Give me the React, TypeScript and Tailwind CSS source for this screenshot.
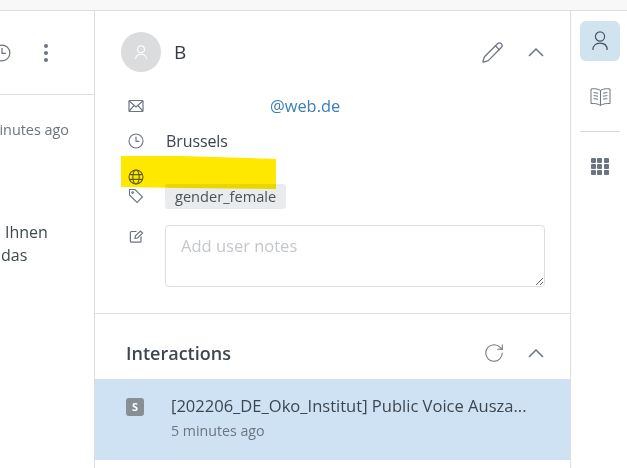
import { Pencil, RotateCw } from 'lucide-react';

function MailIcon() {
  return (
    <svg width="16" height="14" viewBox="0 0 16 14" fill="none" stroke="#6b7480" strokeWidth="1.2">
      <rect x="1" y="1.5" width="14" height="11" rx="0.8" />
      <path d="M1.2 2 L8 8 L14.8 2 M1.2 12 L6 6.6 M14.8 12 L10 6.6" />
    </svg>
  );
}

function ClockIcon({ size = 16 }: { size?: number }) {
  return (
    <svg width={size} height={size} viewBox="0 0 16 16" fill="none" stroke="#6b7480" strokeWidth="1.1">
      <circle cx="8" cy="8" r="7" />
      <path d="M8 3.6 V8.4 H11.4" />
    </svg>
  );
}

function GlobeIcon() {
  return (
    <svg width="16" height="16" viewBox="0 0 16 16" fill="none" stroke="#5f6a72" strokeWidth="1.1">
      <circle cx="8" cy="8" r="7" />
      <ellipse cx="8" cy="8" rx="3.2" ry="7" />
      <path d="M1.4 5.6 H14.6 M1.4 10.4 H14.6" />
    </svg>
  );
}

function TagIcon() {
  return (
    <svg width="16" height="16" viewBox="0 0 16 16" fill="none" stroke="#6b7480" strokeWidth="1.1">
      <path d="M1.5 1.5 H7 L14.5 9 L9 14.5 L1.5 7 Z" />
      <circle cx="4.6" cy="4.6" r="0.8" />
    </svg>
  );
}

function NoteIcon() {
  return (
    <svg width="15" height="15" viewBox="0 0 15 15" fill="none" stroke="#6b7480" strokeWidth="1.2">
      <path d="M7.5 2.5 H2.4 A1 1 0 0 0 1.4 3.5 V12.2 A1 1 0 0 0 2.4 13.2 H11 A1 1 0 0 0 12 12.2 V7.5" />
      <path d="M6 9.4 L6.5 6.9 L11.4 2 L13.5 4.1 L8.6 9 Z" />
    </svg>
  );
}

function BookIcon() {
  return (
    <svg width="21" height="20" viewBox="0 0 21 20" fill="none" stroke="#6b7480" strokeWidth="1">
      <path d="M1 2 C4 1.4 7.5 1.6 10.5 3.4 C13.5 1.6 17 1.4 20 2 V16.6 C17 16.2 13.5 16.6 10.5 18.4 C7.5 16.6 4 16.2 1 16.6 Z" />
      <path d="M10.5 3.4 V18.4 M3.6 5.6 L8 6.2 M3.6 8.6 L8 9.2 M3.6 11.6 L8 12.2 M17.4 5.6 L13 6.2 M17.4 8.6 L13 9.2 M17.4 11.6 L13 12.2" />
    </svg>
  );
}

function GridIcon() {
  return (
    <div className="grid w-[18px] grid-cols-3 gap-px">
      {Array.from({ length: 9 }).map((_, i) => (
        <span key={i} className="h-[5px] w-[5px] rounded-[1px] bg-[#6b7480]" />
      ))}
    </div>
  );
}

function ChevronIcon() {
  return (
    <svg width="16" height="9" viewBox="0 0 16 9" fill="none" stroke="#6b7480" strokeWidth="1.5">
      <path d="M1 8 L8 1 L15 8" />
    </svg>
  );
}

function PersonIcon({ size, stroke, width }: { size: number; stroke: string; width: number }) {
  return (
    <svg width={size} height={size * 1.25} viewBox="0 0 16 20" fill="none" stroke={stroke} strokeWidth={width}>
      <circle cx="8" cy="5.5" r="4.6" />
      <path d="M0.8 19 C0.8 14.4 4 12.2 8 12.2 C12 12.2 15.2 14.4 15.2 19" />
    </svg>
  );
}

function Row({ icon, className, children }: { icon: React.ReactNode; className: string; children?: React.ReactNode }) {
  return (
    <div className={`flex items-center ${className}`}>
      <div className="flex w-[44px] shrink-0 justify-start pl-[7px]">{icon}</div>
      {children}
    </div>
  );
}

export default function App() {
  return (
    <div className="flex h-[468px] w-[627px] flex-col overflow-hidden bg-white font-['Open_Sans','Noto_Sans',sans-serif] text-[#3c444d]">
      <div className="h-[11px] shrink-0 border-b border-[#dedede] bg-[#f8f8f8]" />
      <div className="flex min-h-0 flex-1">
        {/* Conversation list, cut off on the left */}
        <div className="w-[95px] shrink-0 overflow-hidden border-r border-[#dedede]">
          <div className="flex h-[84px] items-center justify-end border-b border-[#dedede] pr-[46px]">
            <div className="flex items-center gap-[33px]">
              <ClockIcon size={18} />
              <div className="flex flex-col gap-[3px]">
                <span className="h-1 w-1 rounded-full bg-[#6b7480]" />
                <span className="h-1 w-1 rounded-full bg-[#6b7480]" />
                <span className="h-1 w-1 rounded-full bg-[#6b7480]" />
              </div>
            </div>
          </div>
          <div className="flex justify-end whitespace-nowrap pr-[25px] pt-[25px] text-[14.4px] leading-5 text-[#6b7480]">
            5 minutes ago
          </div>
          <div className="pt-[81px] text-[16px] leading-[23px] text-[#3f4a4c]">
            <div className="pl-[5px]">Ihnen</div>
            <div className="pl-px">das</div>
          </div>
        </div>

        {/* Contact details */}
        <div className="relative w-[476px] shrink-0 border-r border-[#dedede]">
          <div className="flex h-[82px] items-center pl-[26px] pr-[26px]">
            <div className="flex h-10 w-10 items-center justify-center rounded-full bg-[#dadcdd]">
              <PersonIcon size={12} stroke="#ffffff" width={1.4} />
            </div>
            <span className="ml-[13px] flex-1 text-[19px] font-medium text-[#343a40]">B</span>
            <Pencil size={23} strokeWidth={1.3} className="mr-[24px] text-[#6b7480]" />
            <ChevronIcon />
          </div>

          <div className="pl-[26px]">
            <Row icon={<MailIcon />} className="h-[26px]">
              <span className="pl-[105px] text-[16.4px] text-[#3a7fb5]">@web.de</span>
            </Row>
            <Row icon={<ClockIcon />} className="mt-[9px] h-[26px]">
              <span className="pl-px text-[16px] tracking-[-0.1px]">Brussels</span>
            </Row>
            <Row icon={<GlobeIcon />} className="mt-[14px] h-[18px]" />
            <Row icon={<TagIcon />} className="-mt-[3px] h-[26px]">
              <span className="rounded-[3px] bg-[#e9ebed] px-[10px] text-[14.6px] font-medium leading-[25px] text-[#4b5359]">
                gender_female
              </span>
            </Row>
            <div className="mt-[16px] flex">
              <div className="w-[44px] shrink-0 pl-[8px] pt-[4px]">
                <NoteIcon />
              </div>
              <textarea
                readOnly
                placeholder="Add user notes"
                className="h-[62px] w-[380px] rounded border border-[#dedede] px-[15px] py-[8px] text-[16.5px] leading-6 outline-none placeholder:text-[#c4c7ca]"
              />
            </div>
          </div>

          <div className="mt-[26px] flex h-[66px] items-center border-t border-[#dedede] pl-[31px] pr-[26px] pt-[13px]">
            <span className="flex-1 text-[18px] font-semibold text-[#3e4650]">Interactions</span>
            <RotateCw size={22} strokeWidth={1.1} className="mr-[23px] text-[#6b7480]" />
            <ChevronIcon />
          </div>

          <div className="flex h-[81px] bg-[#cfe2f3] pl-[31px] pt-[15px]">
            <div className="mt-[4px] flex h-[18px] w-[18px] items-center justify-center rounded-[3px] bg-[#868e96] text-[11px] font-bold text-white">
              S
            </div>
            <div className="ml-[27px]">
              <div className="text-[16.55px] leading-6 text-[#3e4650]">[202206_DE_Oko_Institut] Public Voice Ausza...</div>
              <div className="mt-[3px] text-[14.2px] leading-5 text-[#6b7480]">5 minutes ago</div>
            </div>
          </div>

          {/* Marker stroke over the redacted row */}
          <svg className="absolute left-[26px] top-[145px] mix-blend-multiply" width="156" height="34" viewBox="0 0 156 34">
            <path d="M0 0 L60 0 L155 3 L155 33 L60 32 L0 31 Z" fill="#ffe800" />
          </svg>
        </div>

        {/* Side rail */}
        <div className="flex flex-1 flex-col items-center pl-[2px] pt-[10px]">
          <div className="flex h-10 w-10 items-center justify-center rounded-md bg-[#d2e3f0]">
            <PersonIcon size={16} stroke="#4a535c" width={1.2} />
          </div>
          <div className="mt-[26px]">
            <BookIcon />
          </div>
          <div className="mt-[24px] h-px w-10 bg-[#d6d6d6]" />
          <div className="mt-[26px]">
            <GridIcon />
          </div>
        </div>
      </div>
    </div>
  );
}
